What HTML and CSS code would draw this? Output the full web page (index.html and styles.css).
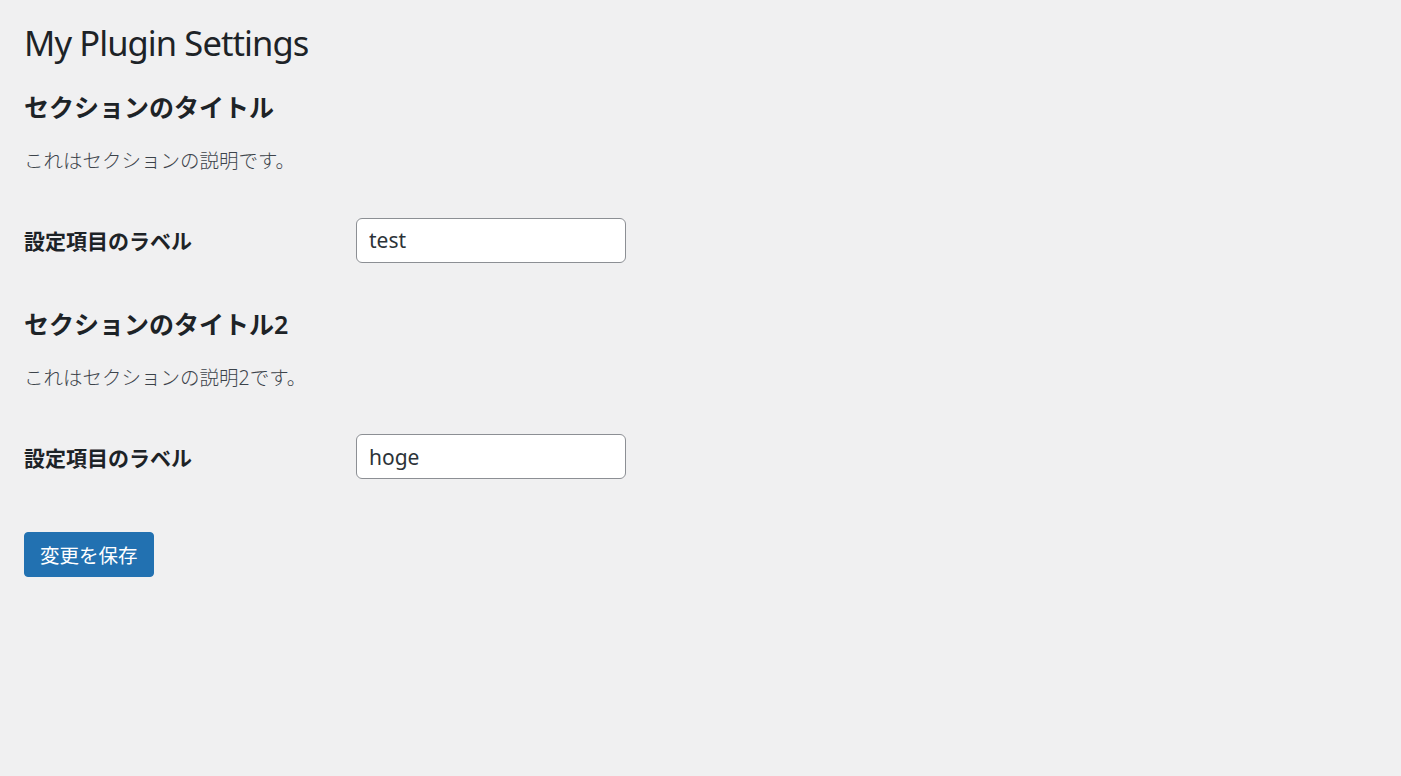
FILE: index.html
```html
<!DOCTYPE html>
<html lang="ja">
<head>
<meta charset="utf-8">
<title>My Plugin Settings</title>
<link rel="stylesheet" href="styles.css">
</head>
<body>
<div class="wrap">
  <h1 class="page-title">My Plugin Settings</h1>
  <form class="settings-form">
    <h2 class="section-title">セクションのタイトル</h2>
    <p class="section-desc">これはセクションの説明です。</p>
    <div class="form-table">
      <div class="form-row">
        <label class="form-label" for="f1">設定項目のラベル</label>
        <div class="form-field"><input class="text-input" id="f1" type="text" value="test"></div>
      </div>
    </div>
    <h2 class="section-title">セクションのタイトル2</h2>
    <p class="section-desc">これはセクションの説明2です。</p>
    <div class="form-table">
      <div class="form-row">
        <label class="form-label" for="f2">設定項目のラベル</label>
        <div class="form-field"><input class="text-input" id="f2" type="text" value="hoge"></div>
      </div>
    </div>
    <div class="submit-row">
      <button class="button-primary" type="button">変更を保存</button>
    </div>
  </form>
</div>
</body>
</html>
```

FILE: styles.css
```css
html, body {
  margin: 0;
  padding: 0;
  background: #f0f0f1;
}
body {
  font-family: "Noto Sans", "Noto Sans CJK JP", sans-serif;
  color: #3c434a;
  font-size: 19.5px;
}
.wrap {
  padding: 20px 0 0 24px;
}
.page-title {
  margin: 0;
  font-size: 34.5px;
  line-height: 45px;
  font-weight: 400;
  letter-spacing: -0.9px;
  color: #1d2327;
}
.section-title {
  margin: 25px 0 0;
  font-size: 25px;
  line-height: 35px;
  font-weight: 600;
  color: #1d2327;
}
.form-table + .section-title {
  margin-top: 22px;
}
.section-desc {
  margin: 21px 0 0;
  font-size: 19.5px;
  line-height: 29px;
  font-weight: 300;
}
.form-table {
  margin-top: 20.5px;
}
.form-row {
  display: flex;
  align-items: center;
  padding: 22px 0;
}
.form-label {
  width: 332px;
  flex: none;
  font-size: 21px;
  font-weight: 600;
  color: #1d2327;
}
.text-input {
  box-sizing: border-box;
  width: 270px;
  height: 45px;
  padding: 0 12px;
  border: 1px solid #8c8f94;
  border-radius: 6px;
  background: #fff;
  font-family: "Noto Sans", "Noto Sans CJK JP", sans-serif;
  font-size: 21px;
  color: #2c3338;
  display: block;
}
.submit-row {
  margin-top: 31px;
}
.button-primary {
  box-sizing: border-box;
  height: 45px;
  padding: 0 15px;
  border: 1px solid #2271b1;
  border-radius: 4px;
  background: #2271b1;
  color: #fff;
  font-family: "Noto Sans", "Noto Sans CJK JP", sans-serif;
  font-size: 19.5px;
  cursor: pointer;
}
```
